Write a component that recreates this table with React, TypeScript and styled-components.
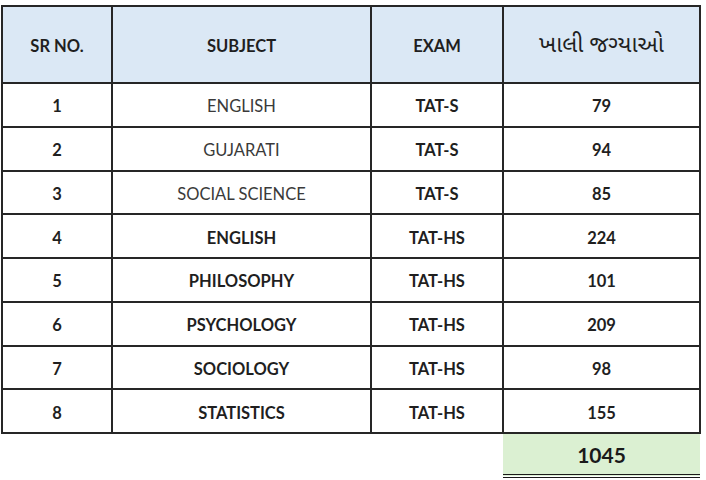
import React from "react";
import styled, { createGlobalStyle } from "styled-components";

const Global = createGlobalStyle`
  html, body { margin: 0; padding: 0; background: #ffffff; }
  body { font-family: Lato, "Open Sans", "Noto Sans", sans-serif; color: #1f1f1f; }
`;

const Page = styled.div`
  padding: 5px 0 0 1px;
  width: 706px;
  height: 480px;
  box-sizing: border-box;
  overflow: hidden;
`;

const Table = styled.table`
  border-collapse: collapse;
  table-layout: fixed;
  width: 698px;
`;

const Col = styled.col<{ $w: number }>`
  width: ${(p) => p.$w}px;
`;

const HeadCell = styled.th<{ $gu?: boolean }>`
  height: 73px;
  padding: 2px 0 0;
  background: #dbe8f5;
  border: 2px solid #262626;
  font-weight: ${(p) => (p.$gu ? 400 : 700)};
  font-size: ${(p) => (p.$gu ? "23px" : "16.5px")};
  font-family: ${(p) =>
    p.$gu ? '"Noto Sans Gujarati", "Noto Sans", Lato, sans-serif' : 'Lato, "Open Sans", sans-serif'};
  color: #1f1f1f;
  text-align: center;
  vertical-align: middle;
`;

const Cell = styled.td<{ $bold?: boolean }>`
  height: 38.75px;
  padding: 3px 0 0;
  border: 2px solid #262626;
  font-size: 16.5px;
  font-weight: ${(p) => (p.$bold ? 700 : 400)};
  color: ${(p) => (p.$bold ? "#1f1f1f" : "#3a3a3a")};
  text-align: center;
  vertical-align: middle;
`;

const EmptyCell = styled.td`
  border: none;
  padding: 0;
`;

const TotalCell = styled.td`
  height: 40px;
  padding: 0;
  border: none;
  border-bottom: 4px double #1a1a1a;
  background: #dbf0d2;
  font-size: 21px;
  font-weight: 700;
  color: #1a1a1a;
  text-align: center;
  vertical-align: middle;
`;

const rows = [
  { n: 1, s: "ENGLISH", e: "TAT-S", c: 79, b: false },
  { n: 2, s: "GUJARATI", e: "TAT-S", c: 94, b: false },
  { n: 3, s: "SOCIAL SCIENCE", e: "TAT-S", c: 85, b: false },
  { n: 4, s: "ENGLISH", e: "TAT-HS", c: 224, b: true },
  { n: 5, s: "PHILOSOPHY", e: "TAT-HS", c: 101, b: true },
  { n: 6, s: "PSYCHOLOGY", e: "TAT-HS", c: 209, b: true },
  { n: 7, s: "SOCIOLOGY", e: "TAT-HS", c: 98, b: true },
  { n: 8, s: "STATISTICS", e: "TAT-HS", c: 155, b: true },
];

export default function App() {
  return (
    <Page>
      <Global />
      <Table>
        <colgroup>
          <Col $w={110} />
          <Col $w={259} />
          <Col $w={132} />
          <Col $w={197} />
        </colgroup>
        <thead>
          <tr>
            <HeadCell>SR NO.</HeadCell>
            <HeadCell>SUBJECT</HeadCell>
            <HeadCell>EXAM</HeadCell>
            <HeadCell $gu>ખાલી જગ્યાઓ</HeadCell>
          </tr>
        </thead>
        <tbody>
          {rows.map((r) => (
            <tr key={r.n}>
              <Cell $bold>{r.n}</Cell>
              <Cell $bold={r.b}>{r.s}</Cell>
              <Cell $bold>{r.e}</Cell>
              <Cell $bold>{r.c}</Cell>
            </tr>
          ))}
        </tbody>
        <tfoot>
          <tr>
            <EmptyCell />
            <EmptyCell />
            <EmptyCell />
            <TotalCell>1045</TotalCell>
          </tr>
        </tfoot>
      </Table>
    </Page>
  );
}
